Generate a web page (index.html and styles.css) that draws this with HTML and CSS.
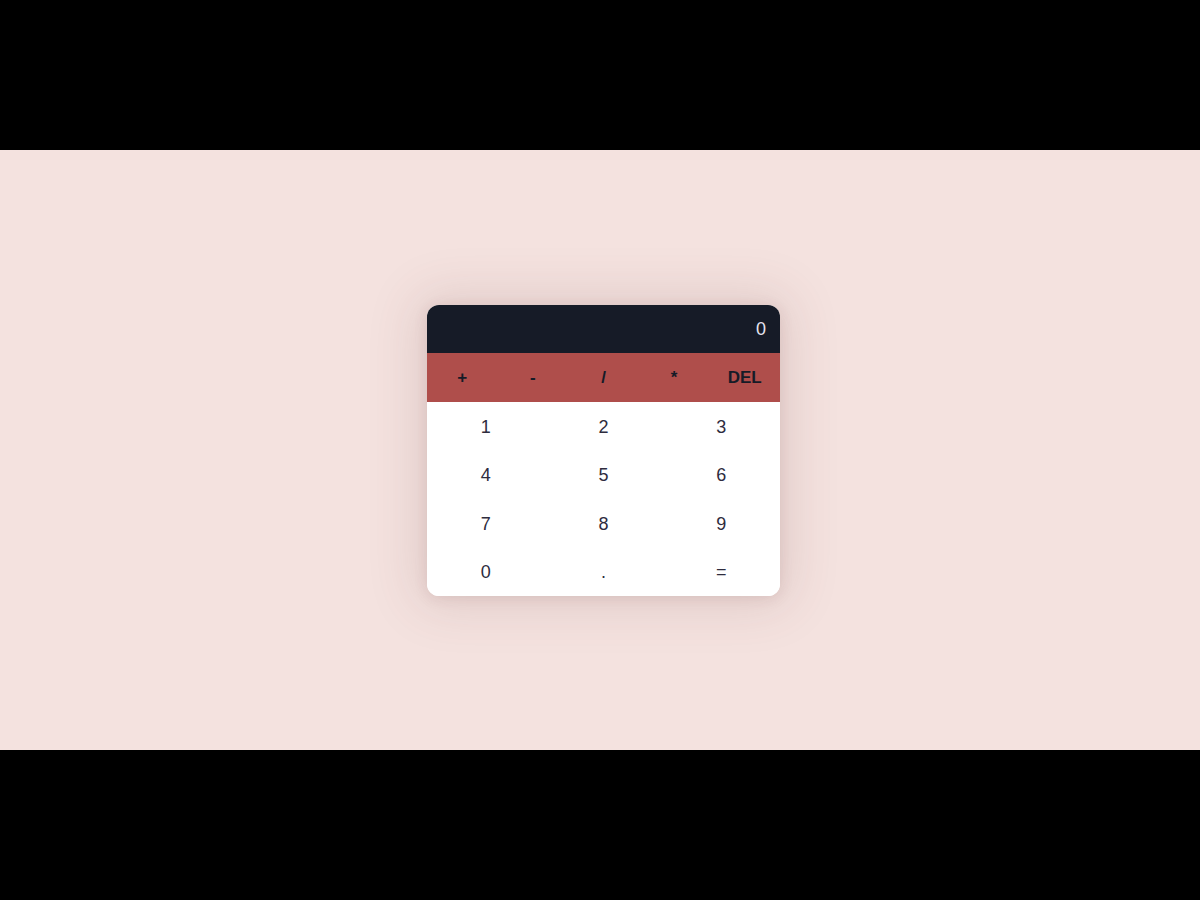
FILE: index.html
```html
<!DOCTYPE html>
<html lang="en">
<head>
<meta charset="utf-8">
<title>Calculator</title>
<link rel="stylesheet" href="styles.css">
</head>
<body>
<main class="stage">
  <div class="calculator">
    <div class="display">0</div>
    <div class="operators">
      <button class="op">+</button>
      <button class="op">-</button>
      <button class="op">/</button>
      <button class="op">*</button>
      <button class="op">DEL</button>
    </div>
    <div class="keys">
      <button class="key">1</button>
      <button class="key">2</button>
      <button class="key">3</button>
      <button class="key">4</button>
      <button class="key">5</button>
      <button class="key">6</button>
      <button class="key">7</button>
      <button class="key">8</button>
      <button class="key">9</button>
      <button class="key">0</button>
      <button class="key">.</button>
      <button class="key">=</button>
    </div>
  </div>
</main>
</body>
</html>
```
FILE: styles.css
```css
html, body {
  margin: 0;
  padding: 0;
  background: #000;
  height: 100%;
}

.stage {
  margin-top: 150px;
  height: 600px;
  background: #f4e2df;
  display: flex;
  align-items: center;
  justify-content: center;
  padding-left: 7px;
  box-sizing: border-box;
  font-family: "Liberation Sans", Arial, sans-serif;
}

.calculator {
  width: 353px;
  border-radius: 12px;
  overflow: hidden;
  background: #fff;
  box-shadow: 0 0 50px 12px rgba(110, 60, 60, 0.13), 0 2px 14px rgba(110, 60, 60, 0.12);
}

.display {
  height: 48px;
  box-sizing: border-box;
  background: #161b27;
  color: #e6e3ef;
  font-size: 18px;
  display: flex;
  align-items: center;
  justify-content: flex-end;
  padding: 2px 14px 0 0;
}

.operators {
  display: grid;
  grid-template-columns: repeat(5, 1fr);
  height: 49px;
  background: #af4e4b;
}

button {
  border: 0;
  background: transparent;
  font-family: inherit;
  padding: 2px 0 0;
  margin: 0;
  cursor: pointer;
}

.op {
  font-size: 17px;
  font-weight: bold;
  color: #161b27;
}

.keys {
  display: grid;
  grid-template-columns: repeat(3, 1fr);
  grid-auto-rows: 48.5px;
  background: #fff;
}

.key {
  font-size: 18px;
  color: #2e2c3e;
  padding-top: 3px;
}
```
